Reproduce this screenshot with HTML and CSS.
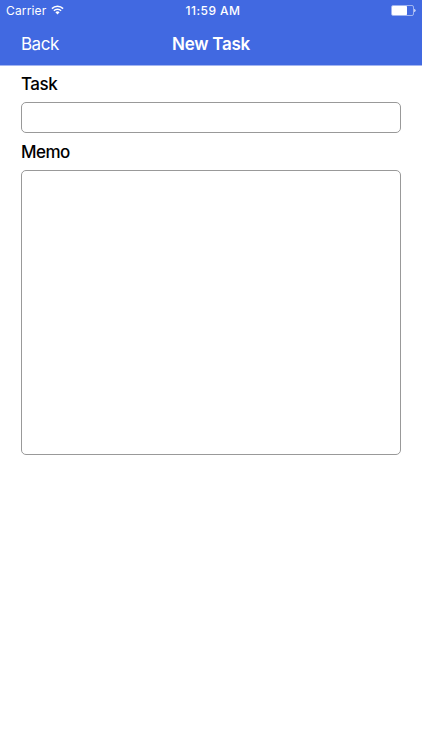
FILE: index.html
```html
<!DOCTYPE html>
<html lang="en">
<head>
<meta charset="utf-8">
<title>New Task</title>
<link rel="stylesheet" href="styles.css">
</head>
<body>
<header class="header">
  <div class="status">
    <div class="carrier"><span>Carrier</span>
      <svg class="wifi" width="13" height="10" viewBox="0 0 13 10"><path d="M.9 3.6a8 8 0 0 1 11.2 0M2.9 5.7a5.1 5.1 0 0 1 7.2 0" fill="none" stroke="#fff" stroke-width="1.5"/><path d="M4.4 7.2a3 3 0 0 1 4.2 0L6.5 9.4z" fill="#fff"/></svg>
    </div>
    <time class="clock">11:59 AM</time>
    <svg class="battery" width="25" height="11" viewBox="0 0 25 11"><rect x=".5" y=".5" width="22" height="10" rx="1.5" fill="none" stroke="#fff" stroke-opacity=".5"/><rect x="1" y="1" width="15" height="9" rx=".7" fill="#fff"/><path d="M23.3 3.8a1.8 1.8 0 0 1 0 3.4z" fill="#fff"/></svg>
  </div>
  <nav class="nav">
    <a class="back">Back</a>
    <h1 class="title">New Task</h1>
  </nav>
</header>
<main class="form">
  <label class="label" for="task">Task</label>
  <input class="field" id="task" type="text">
  <label class="label memo-label" for="memo">Memo</label>
  <textarea class="field memo" id="memo"></textarea>
</main>
</body>
</html>
```
FILE: styles.css
```css
* { box-sizing: border-box; }
body { margin: 0; background: #fff; color: #000; font-family: Inter, "Liberation Sans", sans-serif; }
.header { height: 66px; background: #4169e1; color: #fff; border-bottom: 1px solid #a3b5f1; }
.status { display: grid; grid-template-columns: 1fr auto 1fr; align-items: center; height: 21px; padding: 0 6px; font-size: 12px; line-height: 15px; }
.carrier { display: flex; align-items: center; gap: 5px; letter-spacing: .15px; }
.wifi { margin-top: -1px; }
.clock { margin-left: 4px; font-weight: 500; letter-spacing: .45px; }
.battery { justify-self: end; }
.nav { display: grid; grid-template-columns: 1fr auto 1fr; align-items: center; height: 45px; padding: 0 21px; }
.back { font-size: 17px; letter-spacing: -.5px; }
.title { margin: 0; font-size: 17px; font-weight: 600; letter-spacing: -.25px; }
.form { display: flex; flex-direction: column; padding: 8px 21px 0; }
.label { font-size: 17px; line-height: 21px; font-weight: 500; letter-spacing: -.5px; }
.field { display: block; width: 100%; height: 31px; margin: 7px 0 0; border: 1px solid #999; border-radius: 5px; background: #fff; outline: 0; resize: none; }
.memo-label { margin-top: 9px; }
.memo { height: 285px; margin-top: 7px; }
```
